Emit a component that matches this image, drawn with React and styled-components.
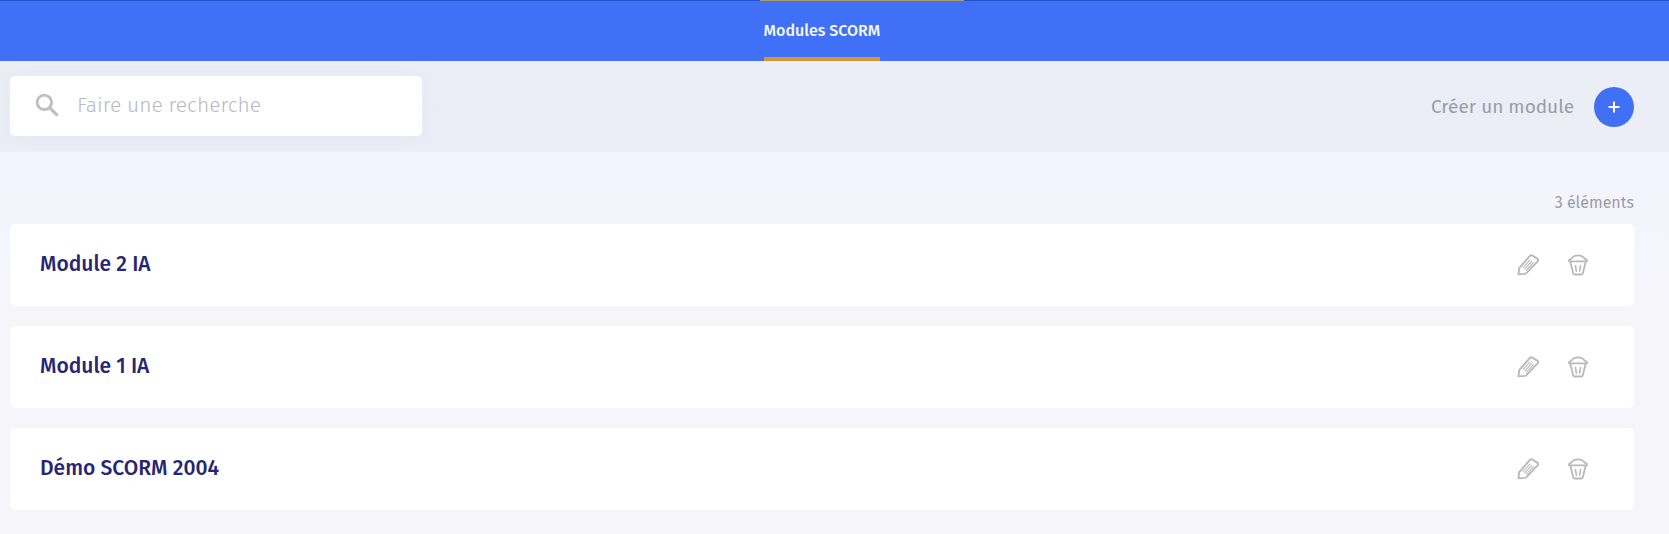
import React from "react";
import styled, { createGlobalStyle } from "styled-components";

const GlobalStyle = createGlobalStyle`
  *, *::before, *::after { box-sizing: border-box; }
  body {
    margin: 0;
    background: #f5f5fa;
    font-family: "Fira Sans", "Noto Sans", sans-serif;
  }
  button { font: inherit; }
`;

const Page = styled.div`
  min-height: 100vh;
  background: linear-gradient(#f4f4fe 200px, #f5f5fa 300px);
`;

const Header = styled.header`
  position: relative;
  height: 61px;
  padding: 0 35px 0 10px;
  display: flex;
  justify-content: center;
  background: #4070f6;
  border-top: 1px solid #2350d0;
`;

const ParentTabMarker = styled.span`
  position: absolute;
  top: -1px;
  left: calc(50% - 75px);
  width: 204px;
  height: 1px;
  background: #b0986c;
`;

const Tab = styled.a`
  display: flex;
  align-items: center;
  padding-top: 4px;
  border-bottom: 4px solid #d3973a;
  color: #f4f8ff;
  font-size: 16px;
  font-weight: 500;
  line-height: 24px;
  text-decoration: none;
`;

const Toolbar = styled.div`
  display: flex;
  align-items: center;
  justify-content: space-between;
  padding: 15px 35px 16px 10px;
  background: #ebeef6;
`;

const SearchBox = styled.label`
  display: flex;
  align-items: center;
  gap: 18px;
  width: 412px;
  height: 60px;
  padding: 0 24px 2px 25px;
  border-radius: 5px;
  background: #fff;
  color: #bfbfc3;
  box-shadow: 0 2px 20px rgba(200, 205, 215, 0.2);
`;

const SearchInput = styled.input`
  flex: 1;
  min-width: 0;
  padding: 0;
  border: 0;
  outline: 0;
  background: transparent;
  font-family: inherit;
  font-size: 21px;
  font-weight: 300;
  color: #55555f;
  &::placeholder { color: #b9b9c2; opacity: 1; }
`;

const CreateButton = styled.button`
  display: flex;
  align-items: center;
  gap: 20px;
  padding: 2px 0 0;
  border: 0;
  background: none;
  color: #9a9ca6;
  font-size: 19px;
  line-height: 24px;
  cursor: pointer;
`;

const PlusCircle = styled.span`
  display: grid;
  place-items: center;
  width: 40px;
  height: 40px;
  border-radius: 50%;
  background: #4070f6;
`;

const Content = styled.main`
  padding: 39px 35px 24px 10px;
`;

const Count = styled.p`
  margin: 0 0 9px;
  color: #9a9ca6;
  font-size: 16px;
  line-height: 24px;
  text-align: right;
`;

const List = styled.ul`
  display: flex;
  flex-direction: column;
  gap: 20px;
  margin: 0;
  padding: 0;
  list-style: none;
`;

const Row = styled.li`
  display: flex;
  align-items: center;
  justify-content: space-between;
  height: 82px;
  padding: 0 44px 0 30px;
  border-radius: 5px;
  background: #fff;
`;

const Title = styled.h2`
  margin: 0;
  padding-bottom: 2px;
  color: #272673;
  font-size: 21px;
  font-weight: 500;
  line-height: 28px;
`;

const Actions = styled.div`
  display: flex;
  gap: 26px;
`;

const IconButton = styled.button`
  display: grid;
  place-items: center;
  width: 24px;
  height: 24px;
  padding: 0;
  border: 0;
  background: none;
  color: #b9b9be;
  cursor: pointer;
`;

const strokes = {
  fill: "none",
  stroke: "currentColor",
  strokeLinecap: "round",
  strokeLinejoin: "round",
  "aria-hidden": true,
};

const SearchIcon = () => (
  <svg width="24" height="24" viewBox="0 0 24 24" {...strokes} strokeLinecap="butt">
    <circle cx="9.3" cy="9.3" r="7.2" strokeWidth="2.8" />
    <path d="M14.3 14.3 22.6 22.6" strokeWidth="3.2" />
  </svg>
);

const PlusIcon = () => (
  <svg width="12" height="12" viewBox="0 0 12 12" {...strokes} stroke="#fff" strokeLinecap="butt">
    <path d="M6 0.5v11M0.5 6h11" strokeWidth="2" />
  </svg>
);

const PencilIcon = () => (
  <svg width="24" height="24" viewBox="0 0 24 24" {...strokes}>
    <path d="M2.4 21.4 3.2 15.2 13.7 3.2Q15 1.8 16.5 2.6L21.2 5.6Q22.8 6.8 21.6 8.4L10.4 20.2Q9.8 20.8 9 20.9Z" strokeWidth="1.9" />
    <path d="M7.2 14.4 13.8 7.1M8.9 15.8 15.7 8.3M10.6 17.2 17.4 9.7" strokeWidth="1.1" />
  </svg>
);

const TrashIcon = () => (
  <svg width="24" height="24" viewBox="0 0 24 24" {...strokes}>
    <path d="M3 8.4Q2.6 6.4 5.2 5.8Q7.4 2.4 12 2.4Q16.6 2.4 18.8 5.8Q21.4 6.4 21 8.4Z" strokeWidth="1.8" />
    <path d="M4.4 9 7.2 20.2Q7.5 21.5 8.8 21.5H15.2Q16.5 21.5 16.8 20.2L19.6 9" strokeWidth="1.8" />
    <path d="M9.5 12.6 10.4 18.2M14.5 12.6 13.6 18.2" strokeWidth="1.6" />
  </svg>
);

const modules = ["Module 2 IA", "Module 1 IA", "Démo SCORM 2004"];

export default function App() {
  return (
    <Page>
      <GlobalStyle />
      <Header>
        <ParentTabMarker />
        <Tab href="#modules" aria-current="page">Modules SCORM</Tab>
      </Header>
      <Toolbar>
        <SearchBox htmlFor="search">
          <SearchIcon />
          <SearchInput id="search" type="text" placeholder="Faire une recherche" aria-label="Faire une recherche" />
        </SearchBox>
        <CreateButton type="button">
          Créer un module
          <PlusCircle><PlusIcon /></PlusCircle>
        </CreateButton>
      </Toolbar>
      <Content id="modules">
        <Count>{modules.length} éléments</Count>
        <List>
          {modules.map((name) => (
            <Row key={name}>
              <Title>{name}</Title>
              <Actions>
                <IconButton type="button" aria-label={`Modifier ${name}`}><PencilIcon /></IconButton>
                <IconButton type="button" aria-label={`Supprimer ${name}`}><TrashIcon /></IconButton>
              </Actions>
            </Row>
          ))}
        </List>
      </Content>
    </Page>
  );
}
